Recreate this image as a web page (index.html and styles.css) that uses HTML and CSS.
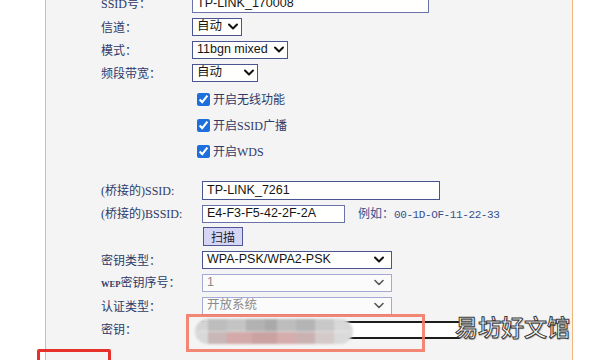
FILE: index.html
```html
<!DOCTYPE html>
<html lang="zh-CN">
<head>
<meta charset="utf-8">
<title>无线设置</title>
<link rel="stylesheet" href="styles.css">
</head>
<body>
<div class="page">
  <div class="panel">
    <div class="form">
      <div class="row">
        <span class="lbl"><span class="asc">SSID</span>号：</span>
        <div class="field input w-ssid">TP-LINK_170008</div>
      </div>
      <div class="row">
        <span class="lbl">信道：</span>
        <div class="field select w-ch"><span>自动</span><svg class="chev" viewBox="0 0 10 7"><polyline points="1,1.5 5,5.5 9,1.5"/></svg></div>
      </div>
      <div class="row">
        <span class="lbl">模式：</span>
        <div class="field select w-mode"><span>11bgn mixed</span><svg class="chev" viewBox="0 0 10 7"><polyline points="1,1.5 5,5.5 9,1.5"/></svg></div>
      </div>
      <div class="row">
        <span class="lbl">频段带宽：</span>
        <div class="field select w-bw"><span>自动</span><svg class="chev" viewBox="0 0 10 7"><polyline points="1,1.5 5,5.5 9,1.5"/></svg></div>
      </div>

      <div class="checks">
        <label class="check"><input type="checkbox" checked><span>开启无线功能</span></label>
        <label class="check"><input type="checkbox" checked><span>开启<span class="asc">SSID</span>广播</span></label>
        <label class="check"><input type="checkbox" checked><span>开启<span class="asc">WDS</span></span></label>
      </div>

      <div class="block2">
        <div class="row">
          <span class="lbl"><span class="asc">(</span>桥接的<span class="asc">)SSID:</span></span>
          <div class="field input tall w-bssid">TP-LINK_7261</div>
        </div>
        <div class="row">
          <span class="lbl"><span class="asc">(</span>桥接的<span class="asc">)BSSID:</span></span>
          <div class="field input w-mac">E4-F3-F5-42-2F-2A</div>
          <span class="hint">例如：<span class="mono">00-1D-OF-11-22-33</span></span>
        </div>
        <div class="row">
          <span class="lbl"></span>
          <div class="btn">扫描</div>
        </div>
        <div class="row">
          <span class="lbl">密钥类型：</span>
          <div class="field select w-key"><span>WPA-PSK/WPA2-PSK</span><svg class="chev" viewBox="0 0 10 7"><polyline points="1,1.5 5,5.5 9,1.5"/></svg></div>
        </div>
        <div class="row">
          <span class="lbl"><span class="asc wep">WEP</span>密钥序号：</span>
          <div class="field select dis w-key"><span>1</span><svg class="chev" viewBox="0 0 10 7"><polyline points="1,1.5 5,5.5 9,1.5"/></svg></div>
        </div>
        <div class="row">
          <span class="lbl">认证类型：</span>
          <div class="field select dis w-key"><span>开放系统</span><svg class="chev" viewBox="0 0 10 7"><polyline points="1,1.5 5,5.5 9,1.5"/></svg></div>
        </div>
        <div class="row keyrow">
          <span class="lbl">密钥：</span>
          <div class="keyinput"></div>
          <div class="blob"></div>
          <div class="mark"></div>
        </div>
      </div>
    </div>
  </div>
  <div class="redbox"></div>
  <div class="watermark">易坊好文馆</div>
</div>
</body>
</html>
```

FILE: styles.css
```css
html, body {
  margin: 0;
  padding: 0;
}

body {
  background: #ffffff;
  font-family: "Noto Sans CJK SC", sans-serif;
  font-size: 12px;
  color: #2f3a68;
  height: 360px;
  overflow: hidden;
}

.page {
  position: relative;
  display: flex;
  height: 360px;
}

.panel {
  margin-left: 45px;
  width: 526px;
  height: 360px;
  background: #f4f4f4;
  border-left: 1px solid #f0b67c;
  border-right: 1px solid #f0b67c;
  overflow: hidden;
}

.form {
  margin-top: -8px;
  padding-left: 55px;
}

.row {
  display: flex;
  align-items: center;
  height: 23px;
}

.lbl {
  flex: none;
  width: 91px;
  white-space: nowrap;
  line-height: 1;
}

.block2 .lbl {
  width: 101px;
}

.asc {
  font-family: "Liberation Serif", serif;
  font-size: 12px;
}

.wep {
  font-weight: bold;
  font-size: 8.5px;
}

.mono {
  font-family: "Liberation Mono", monospace;
  font-size: 11px;
  letter-spacing: -0.4px;
}

.field {
  box-sizing: border-box;
  height: 18px;
  background: #fffffd;
  border: 1px solid #4a5490;
  font-family: "Liberation Sans", "Noto Sans CJK SC", sans-serif;
  font-size: 12.5px;
  line-height: 1;
  color: #151515;
  display: flex;
  align-items: center;
  white-space: nowrap;
}

.input {
  padding: 0 4px;
  border-color: #6a72aa;
}

.input.tall {
  height: 19px;
  border-color: #4a5490;
}

.select {
  justify-content: space-between;
  padding: 0 3px 0 4px;
}

.block2 .select {
  padding-right: 7px;
}

.chev {
  width: 10px;
  height: 7px;
  flex: none;
  fill: none;
  stroke: #111;
  stroke-width: 2;
  stroke-linecap: round;
  stroke-linejoin: round;
}

.select.dis {
  border-color: #a4aad2;
  color: #8a8a8a;
  background: #fbfbfb;
}

.select.dis .chev {
  stroke: #555;
  stroke-width: 1.6;
}

.w-ssid { width: 237px; }
.w-ch { width: 50px; }
.w-mode { width: 96px; }
.w-bw { width: 66px; }
.w-bssid { width: 238px; }
.w-mac { width: 143px; }
.w-key { width: 190px; }

.checks {
  margin-top: 2px;
  padding-left: 96px;
}

.check {
  display: flex;
  align-items: center;
  height: 26px;
  line-height: 1;
}

.check input {
  margin: 0 3px 0 0;
  width: 13px;
  height: 13px;
  accent-color: #1c6fdc;
}

.block2 {
  margin-top: 15px;
}

.hint {
  margin-left: 13px;
  color: #34508c;
  line-height: 1;
  white-space: nowrap;
}

.btn {
  box-sizing: border-box;
  width: 40px;
  height: 19px;
  margin-left: 1px;
  background: #d6d6f4;
  border: 1px solid #4e5694;
  color: #1d1d2e;
  font-size: 12px;
  line-height: 1;
  display: flex;
  align-items: center;
  justify-content: center;
}

.keyrow {
  position: relative;
}

.keyinput {
  box-sizing: border-box;
  width: 258px;
  height: 18px;
  background: #ffffff;
  border-top: 2px solid #1c1c1c;
  border-bottom: 2px solid #1c1c1c;
  margin-top: 2px;
}

.blob {
  position: absolute;
  left: 94px;
  top: 2px;
  width: 158px;
  height: 25px;
  border-radius: 13px;
  filter: blur(1px);
  background:
    linear-gradient(90deg, #d4d4d4 0 8%, #bdbdbd 8% 20%, #c4c4c4 20% 32%, #b2b2b2 32% 44%, #a9a9a9 44% 52%, #bdbdbd 52% 64%, #b4b4b4 64% 76%, #c8c8c8 76% 88%, #d8d8d8 88%) top / 100% 50% no-repeat,
    linear-gradient(90deg, #d8d8d8 0 8%, #c9b6b6 8% 20%, #d3a9a9 20% 36%, #caa2a2 36% 52%, #d5adad 52% 64%, #cab2b2 64% 76%, #d4caca 76% 88%, #dadada 88%) bottom / 100% 50% no-repeat;
}

.mark {
  position: absolute;
  left: 85px;
  top: -3px;
  width: 239px;
  height: 38px;
  box-sizing: border-box;
  border: 3px solid rgba(242, 120, 100, 0.88);
}

.redbox {
  position: absolute;
  left: 37px;
  top: 349px;
  width: 74px;
  height: 24px;
  box-sizing: border-box;
  border: 3px solid #e6302a;
  border-radius: 2px;
}

.watermark {
  position: absolute;
  left: 455px;
  top: 315px;
  font-family: "Noto Sans CJK SC", sans-serif;
  font-size: 23px;
  font-weight: 500;
  line-height: 1;
  color: #ffffff;
  -webkit-text-stroke: 1px #3a3a3a;
  text-shadow: 1px 1px 1px rgba(0, 0, 0, 0.35);
  white-space: nowrap;
}
```
